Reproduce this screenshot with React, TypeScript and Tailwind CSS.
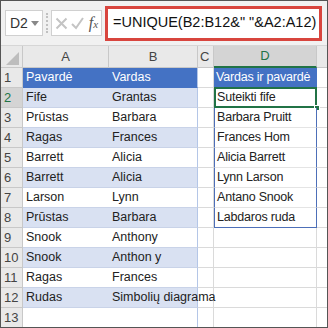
import React from 'react';

const rows: [string, string, string][] = [
    ['Pavardė', 'Vardas', 'Vardas ir pavardė'],
    ['Fife', 'Grantas', 'Suteikti fife'],
    ['Prūstas', 'Barbara', 'Barbara Pruitt'],
    ['Ragas', 'Frances', 'Frances Hom'],
    ['Barrett', 'Alicia', 'Alicia Barrett'],
    ['Barrett', 'Alicia', 'Lynn Larson'],
    ['Larson', 'Lynn', 'Antano Snook'],
    ['Prūstas', 'Barbara', 'Labdaros ruda'],
    ['Snook', 'Anthony', ''],
    ['Snook', 'Anthon y', ''],
    ['Ragas', 'Frances', ''],
    ['Rudas', 'Simbolių diagrama', ''],
    ['', '', ''],
];

const cols = 'grid grid-cols-[22px_86px_89px_16px_103px_1fr]';

const App: React.FC = () => {
    return (
        <div className="w-[328px] h-[328px] overflow-hidden bg-white border border-[#555] font-['Liberation_Sans',Arial,sans-serif] text-[#222]">
            {/* formula bar */}
            <div className="h-[45px] bg-[#f1f1f1] flex items-center pl-[4px] pr-[5px] border-b border-[#d6d6d6]">
                <div className="w-[38px] h-[26px] bg-white border border-[#d0d0d0] flex items-center pl-[4px] gap-[3px] text-[14px] text-[#333]">
                    D2
                    <span className="w-0 h-0 border-l-[4px] border-r-[4px] border-t-[5px] border-l-transparent border-r-transparent border-t-[#888]" />
                </div>
                <div className="w-[3px] h-[20px] ml-[3px] border-l-2 border-dotted border-[#c0c0c0]" />
                <div className="w-[51px] h-[26px] ml-[2px] bg-white border border-[#d0d0d0] flex items-center justify-center gap-[3px]">
                    <svg width="13" height="13" viewBox="0 0 13 13" stroke="#c4c4c4" strokeWidth="2">
                        <path d="M1.5 1.5l10 10M11.5 1.5l-10 10" />
                    </svg>
                    <svg width="13" height="13" viewBox="0 0 13 13" stroke="#c4c4c4" strokeWidth="2" fill="none">
                        <path d="M1 7l4 4 7-10" />
                    </svg>
                    <span className="font-['Liberation_Serif',serif] italic text-[16px] text-[#555] leading-none ml-[2px]">
                        f<span className="text-[11px]">x</span>
                    </span>
                </div>
                <div className="flex-1 h-[35px] ml-[3px] bg-white border-[3px] border-[#d8453e] flex items-center pl-[5px] text-[14.5px] text-[#111] whitespace-nowrap">
                    =UNIQUE(B2:B12&amp;" "&amp;A2:A12)
                </div>
            </div>

            {/* column headers */}
            <div className={`${cols} h-[22px] bg-[#e9e9e9] text-[13px] text-[#444] border-b border-[#c8c8c8]`}>
                <div className="relative border-r border-[#c8c8c8]">
                    <span className="absolute right-[3px] bottom-[3px] w-0 h-0" style={{ borderBottom: '13px solid #bdbdbd', borderLeft: '13px solid transparent' }} />
                </div>
                <div className="flex items-center justify-center border-r border-[#c8c8c8]">A</div>
                <div className="flex items-center justify-center border-r border-[#c8c8c8]">B</div>
                <div className="flex items-center pl-[2px] border-r border-[#c8c8c8]">C</div>
                <div className="flex items-center justify-center bg-[#d4d4d4] border-r border-[#c8c8c8] border-b-2 border-b-[#217346] text-[#217346]">D</div>
                <div />
            </div>

            {/* rows */}
            {rows.map((r, i) => {
                const n = i + 1;
                const head = n === 1;
                const band = n % 2 === 0;
                const ab = head ? 'bg-[#4472c4] text-white' : band ? 'bg-[#d9e1f2]' : 'bg-white';
                const inSpill = n >= 2 && n <= 8;
                return (
                    <div key={n} className={`${cols} h-[20px] text-[12.5px] leading-none`}>
                        <div className={`flex items-center pl-[3px] text-[13px] text-[#444] border-r border-b border-[#c8c8c8] ${n === 2 ? 'bg-[#d4d4d4] text-[#217346]' : 'bg-[#e9e9e9]'}`}>
                            {n}
                        </div>
                        <div className={`flex items-center pl-[3px] whitespace-nowrap border-b ${head ? 'border-[#4472c4]' : 'border-[#c9d3e8]'} ${ab}`}>
                            {r[0]}
                        </div>
                        <div className={`relative flex items-center pl-[3px] whitespace-nowrap border-b ${head ? 'border-[#4472c4]' : 'border-[#c9d3e8]'} ${ab} border-r border-r-[#b4c6e7]`}>
                            {r[1]}
                        </div>
                        <div className="border-r border-b border-[#dadada]" />
                        <div
                            className={`relative flex items-center pl-[2px] whitespace-nowrap tracking-[-0.2px] ${
                                head
                                    ? 'bg-[#4472c4] text-white border-b border-[#4472c4]'
                                    : inSpill
                                    ? `bg-white border-l border-r border-[#4d6fb8] ${n === 8 ? 'border-b' : 'border-b border-b-[#e4e4e4]'}`
                                    : 'border-r border-b border-[#dadada]'
                            }`}
                        >
                            {r[2]}
                            {n === 2 && (
                                <>
                                    <span className="absolute -inset-[1px] border-2 border-[#217346]" />
                                    <span className="absolute -right-[4px] -bottom-[4px] w-[6px] h-[6px] bg-[#217346] border border-white" />
                                </>
                            )}
                        </div>
                        <div className="border-b border-[#dadada]" />
                    </div>
                );
            })}
        </div>
    );
};

export default App;
